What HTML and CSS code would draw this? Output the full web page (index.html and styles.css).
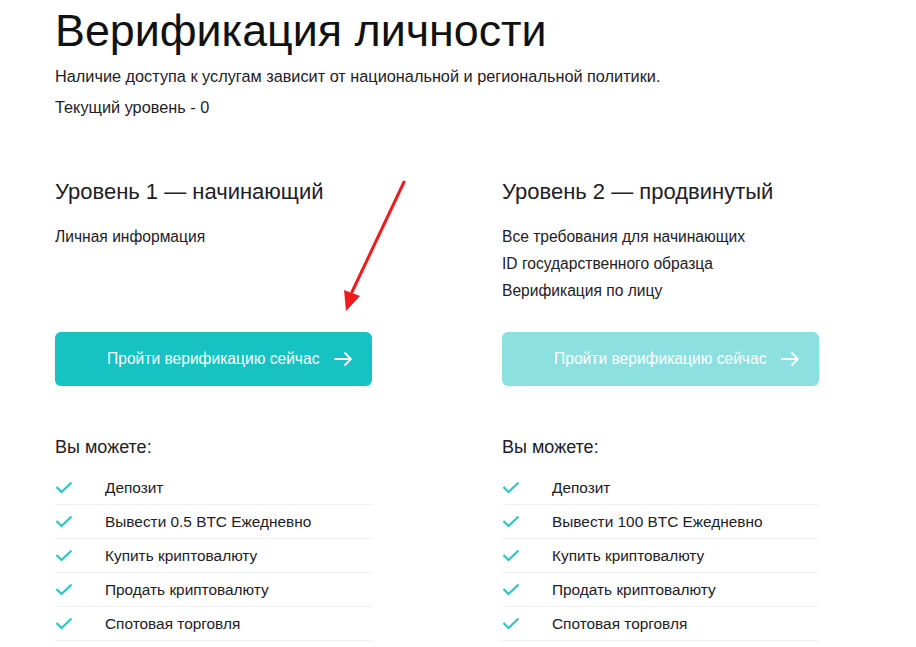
FILE: index.html
```html
<!DOCTYPE html>
<html lang="ru">
<head>
    <meta charset="UTF-8">
    <meta name="viewport" content="width=device-width, initial-scale=1.0">
    <title>Верификация личности</title>
    <link rel="stylesheet" href="styles.css">
</head>
<body>
    <div class="page">
        <h1>Верификация личности</h1>
        <p class="lead">Наличие доступа к услугам зависит от национальной и региональной политики.</p>
        <p class="current">Текущий уровень - 0</p>

        <div class="levels">
            <div class="level">
                <h2>Уровень 1 — начинающий</h2>
                <div class="reqs">
                    <p>Личная информация</p>
                </div>
                <button class="verify-btn">
                    <span>Пройти верификацию сейчас</span>
                    <svg width="20" height="16" viewBox="0 0 20 16"><path d="M1 8h17M11.5 1.5L18 8l-6.5 6.5" fill="none" stroke="#fff" stroke-width="1.8"/></svg>
                </button>
                <h3>Вы можете:</h3>
                <ul class="perks">
                    <li><svg class="check" width="18" height="13" viewBox="0 0 18 13"><path d="M1.5 6l5 5L16.5 1.5" fill="none" stroke="#2ec4c4" stroke-width="2.2"/></svg>Депозит</li>
                    <li><svg class="check" width="18" height="13" viewBox="0 0 18 13"><path d="M1.5 6l5 5L16.5 1.5" fill="none" stroke="#2ec4c4" stroke-width="2.2"/></svg>Вывести 0.5 BTC Ежедневно</li>
                    <li><svg class="check" width="18" height="13" viewBox="0 0 18 13"><path d="M1.5 6l5 5L16.5 1.5" fill="none" stroke="#2ec4c4" stroke-width="2.2"/></svg>Купить криптовалюту</li>
                    <li><svg class="check" width="18" height="13" viewBox="0 0 18 13"><path d="M1.5 6l5 5L16.5 1.5" fill="none" stroke="#2ec4c4" stroke-width="2.2"/></svg>Продать криптовалюту</li>
                    <li><svg class="check" width="18" height="13" viewBox="0 0 18 13"><path d="M1.5 6l5 5L16.5 1.5" fill="none" stroke="#2ec4c4" stroke-width="2.2"/></svg>Спотовая торговля</li>
                </ul>
            </div>
            <div class="level">
                <h2>Уровень 2 — продвинутый</h2>
                <div class="reqs">
                    <p>Все требования для начинающих</p>
                    <p>ID государственного образца</p>
                    <p>Верификация по лицу</p>
                </div>
                <button class="verify-btn disabled">
                    <span>Пройти верификацию сейчас</span>
                    <svg width="20" height="16" viewBox="0 0 20 16"><path d="M1 8h17M11.5 1.5L18 8l-6.5 6.5" fill="none" stroke="#fff" stroke-width="1.8"/></svg>
                </button>
                <h3>Вы можете:</h3>
                <ul class="perks">
                    <li><svg class="check" width="18" height="13" viewBox="0 0 18 13"><path d="M1.5 6l5 5L16.5 1.5" fill="none" stroke="#2ec4c4" stroke-width="2.2"/></svg>Депозит</li>
                    <li><svg class="check" width="18" height="13" viewBox="0 0 18 13"><path d="M1.5 6l5 5L16.5 1.5" fill="none" stroke="#2ec4c4" stroke-width="2.2"/></svg>Вывести 100 BTC Ежедневно</li>
                    <li><svg class="check" width="18" height="13" viewBox="0 0 18 13"><path d="M1.5 6l5 5L16.5 1.5" fill="none" stroke="#2ec4c4" stroke-width="2.2"/></svg>Купить криптовалюту</li>
                    <li><svg class="check" width="18" height="13" viewBox="0 0 18 13"><path d="M1.5 6l5 5L16.5 1.5" fill="none" stroke="#2ec4c4" stroke-width="2.2"/></svg>Продать криптовалюту</li>
                    <li><svg class="check" width="18" height="13" viewBox="0 0 18 13"><path d="M1.5 6l5 5L16.5 1.5" fill="none" stroke="#2ec4c4" stroke-width="2.2"/></svg>Спотовая торговля</li>
                </ul>
            </div>
        </div>

        <svg class="pointer" width="80" height="140" viewBox="0 0 80 140">
            <line x1="74" y1="8" x2="22" y2="118" stroke="#ee1c1c" stroke-width="3" stroke-linecap="round"/>
            <polygon points="16,137 14,116 30,122" fill="#ee1c1c"/>
        </svg>
    </div>
</body>
</html>
```

FILE: styles.css
```css
body {
    margin: 0;
    background: #fff;
    font-family: "Liberation Sans", Arial, sans-serif;
    color: #1e2026;
}
.page {
    position: relative;
    padding: 0 55px;
}
h1 {
    margin: 4px 0 0;
    font-size: 44.8px;
    line-height: 52px;
    font-weight: normal;
    color: #111;
}
.lead,
.current {
    margin: 8px 0 0;
    font-size: 16.3px;
    line-height: 24px;
}
.current {
    margin-top: 7px;
}
.levels {
    display: grid;
    grid-template-columns: 317px 317px;
    column-gap: 130px;
    margin-top: 58px;
}
h2 {
    margin: 0;
    font-size: 22px;
    line-height: 30px;
    font-weight: normal;
}
.reqs {
    height: 81px;
    margin-top: 16px;
}
.reqs p {
    margin: 0;
    font-size: 15.6px;
    line-height: 27px;
}
.verify-btn {
    display: flex;
    align-items: center;
    gap: 14px;
    width: 317px;
    height: 54px;
    margin-top: 28px;
    padding: 0 0 0 52px;
    background: #17c2c2;
    color: #fff;
    border: none;
    border-radius: 6px;
    font-family: inherit;
    font-size: 15.6px;
    cursor: pointer;
}
.verify-btn.disabled {
    background: #8ce0e0;
    cursor: default;
}
h3 {
    margin: 49px 0 0;
    font-size: 18px;
    line-height: 24px;
    font-weight: normal;
}
.perks {
    list-style: none;
    margin: 12px 0 0;
    padding: 0;
}
.perks li {
    display: flex;
    align-items: center;
    height: 33px;
    border-bottom: 1px solid #f0f0f0;
    font-size: 15.4px;
}
.check {
    flex: none;
    margin-right: 32px;
}
.pointer {
    position: absolute;
    left: 330px;
    top: 170px;
}
```
